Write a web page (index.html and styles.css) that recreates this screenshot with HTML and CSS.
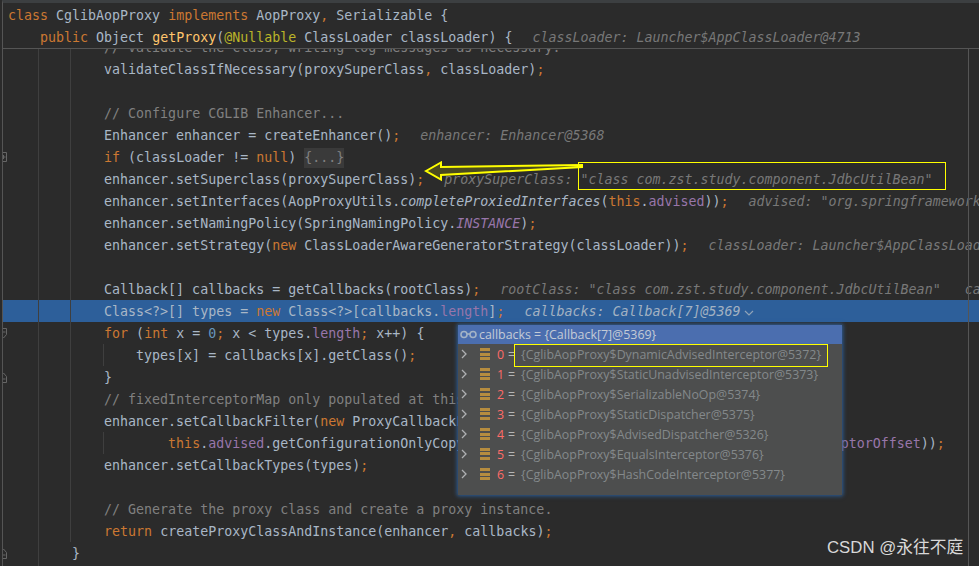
FILE: index.html
```html
<!DOCTYPE html>
<html lang="en">
<head>
  <meta charset="UTF-8" />
  <title>CglibAopProxy</title>
  <link rel="stylesheet" href="styles.css">
</head>
<body>
  <div class="editor">
    <!-- Sticky lines -->
    <div class="sticky">
      <div class="line"><span class="k">class</span> CglibAopProxy <span class="k">implements</span> AopProxy<span class="k">,</span> Serializable {</div>
      <div class="line">    <span class="k">public</span> Object <span class="m">getProxy</span>(<span class="a">@Nullable</span> ClassLoader classLoader) {<span class="h">classLoader: Launcher$AppClassLoader@4713</span></div>
    </div>

    <!-- Code -->
    <div class="code">
      <div class="line first">            <span class="c">// Validate the class, writing log messages as necessary.</span></div>
      <div class="line">            validateClassIfNecessary(proxySuperClass<span class="k">,</span> classLoader)<span class="k">;</span></div>
      <div class="line"></div>
      <div class="line">            <span class="c">// Configure CGLIB Enhancer...</span></div>
      <div class="line">            Enhancer enhancer = createEnhancer()<span class="k">;</span><span class="h">enhancer: Enhancer@5368</span></div>
      <div class="line"><svg class="fold" width="8" height="11" viewBox="0 0 8 11"><path d="M.5.5h6v9h-6zM1.500 5h4M3.500 3v4" fill="#2b2b2b" stroke="#666"/></svg>            <span class="k">if</span> (classLoader != <span class="k">null</span>) <span class="folded">{...}</span></div>
      <div class="line">            enhancer.setSuperclass(proxySuperClass)<span class="k">;</span><span class="h">proxySuperClass: "class com.zst.study.component.JdbcUtilBean"</span></div>
      <div class="line">            enhancer.setInterfaces(AopProxyUtils.<span class="i">completeProxiedInterfaces</span>(<span class="k">this</span>.<span class="f">advised</span>))<span class="k">;</span><span class="h">advised: "org.springframework.aop.framework.ProxyFactory"</span></div>
      <div class="line">            enhancer.setNamingPolicy(SpringNamingPolicy.<span class="f i">INSTANCE</span>)<span class="k">;</span></div>
      <div class="line">            enhancer.setStrategy(<span class="k">new</span> ClassLoaderAwareGeneratorStrategy(classLoader))<span class="k">;</span><span class="h">classLoader: Launcher$AppClassLoader@4713</span></div>
      <div class="line"></div>
      <div class="line">            Callback[] callbacks = getCallbacks(rootClass)<span class="k">;</span><span class="h">rootClass: "class com.zst.study.component.JdbcUtilBean"   callbacks</span></div>
      <div class="line selected">            Class&lt;?&gt;[] types = <span class="k">new</span> Class&lt;?&gt;[callbacks.<span class="f">length</span>]<span class="k">;</span><span class="h">callbacks: Callback[7]@5369</span><svg class="drop" width="10" height="6" viewBox="0 0 10 6"><path d="M1 1l4 4 4-4" fill="none" stroke="#8fa3b8" stroke-width="1.2"/></svg></div>
      <div class="line"><svg class="fold" width="8" height="11" viewBox="0 0 8 11"><path d="M.5.5h6v6l-3 3.500-3-3.500zM1.500 4h4" fill="#2b2b2b" stroke="#666"/></svg>            <span class="k">for</span> (<span class="k">int</span> x = <span class="n">0</span><span class="k">;</span> x &lt; types.<span class="f">length</span><span class="k">;</span> x++) {</div>
      <div class="line">                types[x] = callbacks[x].getClass()<span class="k">;</span></div>
      <div class="line"><svg class="fold" width="8" height="11" viewBox="0 0 8 11"><path d="M.5 10.500h6v-6l-3-3.500-3 3.500zM1.500 7h4" fill="#2b2b2b" stroke="#666"/></svg>            }</div>
      <div class="line">            <span class="c">// fixedInterceptorMap only populated at this point, after getCallbacks call above</span></div>
      <div class="line">            enhancer.setCallbackFilter(<span class="k">new</span> ProxyCallbackFilter(</div>
      <div class="line">                    <span class="k">this</span>.<span class="f">advised</span>.getConfigurationOnlyCopy()<span class="k">,</span> <span class="k">this</span>.<span class="f">fixedInterceptorMap</span><span class="k">,</span> <span class="k">this</span>.<span class="f">fixedInterceptorOffset</span>))<span class="k">;</span></div>
      <div class="line">            enhancer.setCallbackTypes(types)<span class="k">;</span></div>
      <div class="line"></div>
      <div class="line">            <span class="c">// Generate the proxy class and create a proxy instance.</span></div>
      <div class="line">            <span class="k">return</span> createProxyClassAndInstance(enhancer<span class="k">,</span> callbacks)<span class="k">;</span></div>
      <div class="line"><svg class="fold" width="8" height="11" viewBox="0 0 8 11"><path d="M.5 10.500h6v-6l-3-3.500-3 3.500zM1.500 7h4" fill="#2b2b2b" stroke="#666"/></svg>        }</div>

      <div class="guide guide-outer"></div>
      <div class="guide guide-inner"></div>
      <div class="guide guide-for"></div>
      <div class="guide guide-wrap"></div>
      <div class="guide guide-right"></div>
    </div>
  </div>

  <!-- Debugger popup -->
  <div class="popup">
    <div class="popup-title">
      <svg class="glasses" width="17" height="9" viewBox="0 0 17 9"><g fill="none" stroke="#a3b3c6" stroke-width="1.6"><circle cx="4" cy="4.500" r="3"/><circle cx="13" cy="4.500" r="3"/><path d="M7 4h3"/></g></svg>
      <span>callbacks = {Callback[7]@5369}</span>
    </div>
    <div class="row"><svg class="arrow" width="6" height="10" viewBox="0 0 6 10"><path d="M1 1l4 4-4 4" fill="none" stroke="#aeb0b2" stroke-width="1.3"/></svg><span class="stack"></span><span class="idx">0</span><span class="eq">=</span><span class="val">{CglibAopProxy$DynamicAdvisedInterceptor@5372}</span></div>
    <div class="row"><svg class="arrow" width="6" height="10" viewBox="0 0 6 10"><path d="M1 1l4 4-4 4" fill="none" stroke="#aeb0b2" stroke-width="1.3"/></svg><span class="stack"></span><span class="idx">1</span><span class="eq">=</span><span class="val">{CglibAopProxy$StaticUnadvisedInterceptor@5373}</span></div>
    <div class="row"><svg class="arrow" width="6" height="10" viewBox="0 0 6 10"><path d="M1 1l4 4-4 4" fill="none" stroke="#aeb0b2" stroke-width="1.3"/></svg><span class="stack"></span><span class="idx">2</span><span class="eq">=</span><span class="val">{CglibAopProxy$SerializableNoOp@5374}</span></div>
    <div class="row"><svg class="arrow" width="6" height="10" viewBox="0 0 6 10"><path d="M1 1l4 4-4 4" fill="none" stroke="#aeb0b2" stroke-width="1.3"/></svg><span class="stack"></span><span class="idx">3</span><span class="eq">=</span><span class="val">{CglibAopProxy$StaticDispatcher@5375}</span></div>
    <div class="row"><svg class="arrow" width="6" height="10" viewBox="0 0 6 10"><path d="M1 1l4 4-4 4" fill="none" stroke="#aeb0b2" stroke-width="1.3"/></svg><span class="stack"></span><span class="idx">4</span><span class="eq">=</span><span class="val">{CglibAopProxy$AdvisedDispatcher@5326}</span></div>
    <div class="row"><svg class="arrow" width="6" height="10" viewBox="0 0 6 10"><path d="M1 1l4 4-4 4" fill="none" stroke="#aeb0b2" stroke-width="1.3"/></svg><span class="stack"></span><span class="idx">5</span><span class="eq">=</span><span class="val">{CglibAopProxy$EqualsInterceptor@5376}</span></div>
    <div class="row"><svg class="arrow" width="6" height="10" viewBox="0 0 6 10"><path d="M1 1l4 4-4 4" fill="none" stroke="#aeb0b2" stroke-width="1.3"/></svg><span class="stack"></span><span class="idx">6</span><span class="eq">=</span><span class="val">{CglibAopProxy$HashCodeInterceptor@5377}</span></div>
  </div>

  <!-- Annotations drawn on the screenshot -->
  <div class="mark mark-hint"></div>
  <div class="mark mark-row"></div>
  <svg class="mark-arrow" width="160" height="24" viewBox="0 0 160 24"><path d="M2 10L17 1.500v4.500L158 4v2L17 14v4.500z" fill="#4a4a20" stroke="#ffff00" stroke-width="2"/></svg>

  <div class="watermark">CSDN @永往不庭</div>
</body>
</html>
```

FILE: styles.css
```css
* {
  box-sizing: border-box;
  margin: 0;
  padding: 0;
}
body {
  height: 100vh;
  overflow: hidden;
  background-color: #2b2b2b;
}
.editor {
  height: 100vh;
  overflow: hidden;
  margin-left: 2px;
  border-left: 1px solid #555;
  border-top: 3px solid #3c3f41;
  font-family: "DejaVu Sans Mono", monospace;
  font-size: 13.3px;
  color: #a9b7c6;
}
.line {
  position: relative;
  height: 22px;
  line-height: 24px;
  padding-left: 5px;
  white-space: pre;
}
.sticky {
  position: relative;
  z-index: 2;
  height: 46px;
  padding-top: 1px;
  background-color: #2b2b2b;
  border-bottom: 1px solid #555;
}
.code {
  position: relative;
  height: 520px;
  overflow: hidden;
}
.first {
  margin-top: -13px;
}
.selected {
  background-color: #2d5f9a;
}
.k { color: #cc7832; }
.c { color: #808080; }
.m { color: #ffc66d; }
.a { color: #bbb529; }
.f { color: #9876aa; }
.n { color: #6897bb; }
.i { font-style: italic; }
.h {
  margin-left: 20px;
  color: #787878;
  font-style: italic;
}
.selected .h {
  color: #a3b2c2;
}
.folded {
  display: inline-block;
  height: 20px;
  line-height: 20px;
  background-color: #3a3a3a;
  color: #808080;
}
.fold {
  position: absolute;
  left: -3px;
  top: 6px;
}
.drop {
  margin-left: 3px;
}
.guide {
  position: absolute;
  width: 1px;
  background-color: #3f3f3f;
}
.guide-outer { left: 35px; top: 0; bottom: 0; }
.guide-inner { left: 67px; top: 0; height: 493px; }
.guide-for { left: 100px; top: 295px; height: 22px; }
.guide-wrap { left: 100px; top: 383px; height: 22px; }
.guide-right { left: 965px; top: 0; bottom: 0; background-color: #555; }

.popup {
  position: absolute;
  z-index: 3;
  left: 458px;
  top: 325px;
  width: 384px;
  height: 170px;
  background-color: #4d4e4e;
  box-shadow: 0 0 4px 1px #2d5f9a;
  font-family: "Open Sans", sans-serif;
  font-size: 12.4px;
}
.popup-title {
  display: flex;
  align-items: center;
  gap: 2px;
  height: 19px;
  padding-left: 2px;
  background-color: #4b6eaf;
  color: #c4cbd6;
}
.row {
  display: flex;
  align-items: center;
  height: 20px;
  padding-left: 3px;
}
.arrow {
  flex-shrink: 0;
}
.stack {
  width: 10px;
  height: 12px;
  margin-left: 13px;
  background: repeating-linear-gradient(#b58c3f 0 3px, transparent 3px 4.500px);
}
.idx {
  width: 11px;
  margin-left: 7px;
  color: #ff6b68;
}
.eq {
  width: 13px;
  color: #b5b5b5;
}
.val {
  color: #84898b;
  white-space: nowrap;
}
.mark {
  position: absolute;
  z-index: 4;
  border: 1px solid #ffff00;
}
.mark-hint {
  left: 578px;
  top: 162px;
  width: 368px;
  height: 28px;
}
.mark-row {
  left: 514px;
  top: 344px;
  width: 314px;
  height: 23px;
}
.mark-arrow {
  position: absolute;
  z-index: 4;
  left: 424px;
  top: 161px;
}
.watermark {
  position: absolute;
  z-index: 4;
  left: 827px;
  top: 534px;
  font-family: "Liberation Sans", "Noto Sans CJK SC", sans-serif;
  font-size: 16.8px;
  color: #d8d8d8;
  white-space: nowrap;
}
```
